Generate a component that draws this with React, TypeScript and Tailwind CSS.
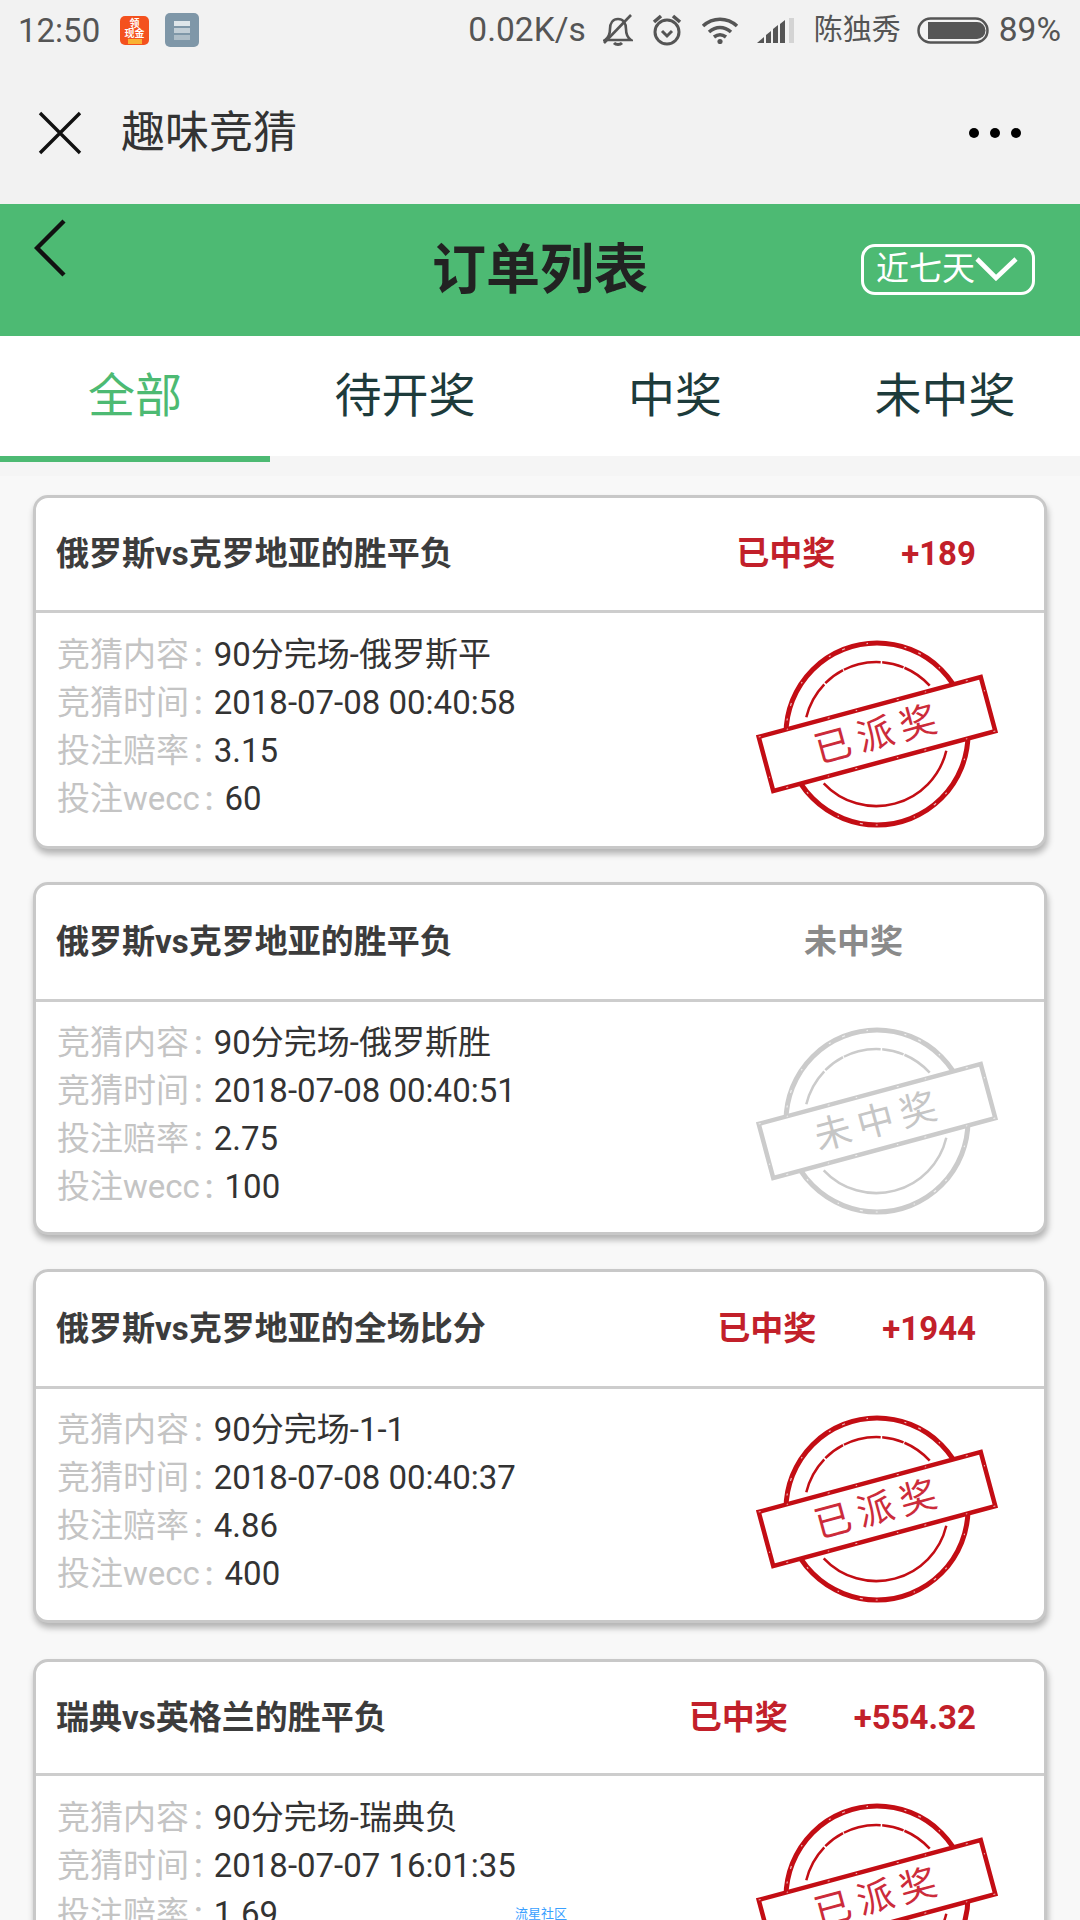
interface Order {
  title: string;
  won: boolean;
  amount?: string;
  content: string;
  time: string;
  odds: string;
  stake: string;
  headerHeight: string;
  bodyHeight: string;
  gap: string;
}

const orders: Order[] = [
  {
    title: '俄罗斯vs克罗地亚的胜平负',
    won: true,
    amount: '+189',
    content: '90分完场-俄罗斯平',
    time: '2018-07-08 00:40:58',
    odds: '3.15',
    stake: '60',
    headerHeight: 'h-[115px]',
    bodyHeight: 'h-[233px]',
    gap: 'mb-[33px]'
  },
  {
    title: '俄罗斯vs克罗地亚的胜平负',
    won: false,
    content: '90分完场-俄罗斯胜',
    time: '2018-07-08 00:40:51',
    odds: '2.75',
    stake: '100',
    headerHeight: 'h-[117px]',
    bodyHeight: 'h-[230px]',
    gap: 'mb-[34px]'
  },
  {
    title: '俄罗斯vs克罗地亚的全场比分',
    won: true,
    amount: '+1944',
    content: '90分完场-1-1',
    time: '2018-07-08 00:40:37',
    odds: '4.86',
    stake: '400',
    headerHeight: 'h-[117px]',
    bodyHeight: 'h-[231px]',
    gap: 'mb-[36px]'
  },
  {
    title: '瑞典vs英格兰的胜平负',
    won: true,
    amount: '+554.32',
    content: '90分完场-瑞典负',
    time: '2018-07-07 16:01:35',
    odds: '1.69',
    stake: '200',
    headerHeight: 'h-[114px]',
    bodyHeight: 'h-[233px]',
    gap: 'mb-[33px]'
  }
];

const tabs = ['全部', '待开奖', '中奖', '未中奖'];

function StatusBar() {
  return (
    <div className="flex h-[60px] items-center pl-[18px] pr-[19px] text-[#555]">
      <span className="text-[33px] leading-none">12:50</span>
      <svg className="ml-[20px]" width="29" height="29" viewBox="0 0 29 29">
        <rect width="29" height="29" rx="5" fill="#f4511e" />
        <text x="14.5" y="11" textAnchor="middle" fontSize="10" fontWeight="700" fill="#fff">领</text>
        <text x="14.5" y="21" textAnchor="middle" fontSize="10" fontWeight="700" fill="#fff">现金</text>
        <rect x="8" y="23" width="14" height="5" fill="#f9b233" />
      </svg>
      <svg className="ml-[16px]" width="34" height="34" viewBox="0 0 34 34">
        <rect width="34" height="34" rx="5" fill="#7f97a8" />
        <rect x="9" y="8" width="16" height="5" fill="#dfe6ea" />
        <rect x="9" y="15" width="16" height="5" fill="#c2ced6" />
        <rect x="9" y="22" width="16" height="5" fill="#aebdc7" />
      </svg>
      <span className="ml-auto text-[33.5px] leading-none">0.02K/s</span>
      <svg className="ml-[17px]" width="30" height="32" viewBox="0 0 30 32" fill="none" stroke="#555" strokeWidth="2.6">
        <path d="M2 26c3-2 5-5 5-11 0-6 3-10 8-10s8 4 8 10c0 6 2 9 5 11z" />
        <path d="M11 29c2 2 6 2 8 0" strokeWidth="3" />
        <path d="M1 29 28 1" />
      </svg>
      <svg className="ml-[18px]" width="32" height="32" viewBox="0 0 32 32" fill="none" stroke="#555" strokeWidth="3">
        <circle cx="16" cy="18" r="12" />
        <path d="M11 17l5 5 5-5" />
        <path d="M3 8l7-6M29 8l-7-6" strokeWidth="3.6" />
      </svg>
      <svg className="ml-[18px]" width="38" height="28" viewBox="0 0 38 28" fill="none" stroke="#555" strokeWidth="3.6">
        <path d="M2 10c10-9 24-9 34 0" />
        <path d="M8 16c7-6 15-6 22 0" />
        <path d="M13 21c4-3 8-3 12 0" />
        <circle cx="19" cy="25.5" r="2.6" fill="#555" stroke="none" />
      </svg>
      <svg className="ml-[18px]" width="37" height="25" viewBox="0 0 37 25">
        <path d="M0 25 7 19v6z" fill="#555" />
        <path d="M9 17l5-4v12H9z" fill="#555" />
        <path d="M16 11l5-4v18h-5z" fill="#555" />
        <path d="M23 6l5-4v23h-5z" fill="#555" />
        <path d="M32 0h5v25h-5z" fill="#d4d4d4" />
      </svg>
      <span className="ml-[20px] text-[29px] leading-none">陈独秀</span>
      <svg className="ml-[16px]" width="72" height="27" viewBox="0 0 72 27">
        <rect x="1.5" y="1.5" width="69" height="24" rx="12" fill="none" stroke="#555" strokeWidth="2.5" />
        <path d="M11 5h49a8.500 8.500 0 0 1 0 17H11z" fill="#555" />
      </svg>
      <span className="ml-[10px] text-[33.5px] leading-none">89%</span>
    </div>
  );
}

function Stamp({ won }: { won: boolean }) {
  const color = won ? '#c30d14' : '#cbcbcb';
  const textColor = won ? '#cc2b3a' : '#c6c6c6';
  return (
    <svg width="250" height="210" viewBox="-125 -105 250 210" className="mt-[8px] shrink-0">
      <circle r="91" fill="none" stroke={color} strokeWidth="5" />
      {/* white flecks so the ring reads as a worn rubber stamp */}
      <circle r="91" fill="none" stroke="#fff" strokeWidth="1.2" strokeOpacity="0.7" strokeDasharray="3 22 1.500 37 2 13" />
      <path d="M-70.7 -16.7A72 72 0 0 1 52.7 -48.3" fill="none" stroke={color} strokeWidth="2.5" strokeDasharray="38 1.500 22 1" />
      <path d="M69.3 16.7A72 72 0 0 1 -53.3 49.3" fill="none" stroke={color} strokeWidth="2.5" />
      <g transform="rotate(-15.1)">
        <rect x="-115" y="-28" width="230" height="56" fill="#fff" stroke={color} strokeWidth="4.5" />
        <rect x="-115" y="-28" width="230" height="56" fill="none" stroke="#fff" strokeWidth="1" strokeOpacity="0.7" strokeDasharray="2 27 1.500 41" />
        <text
          x="2"
          y="13"
          textAnchor="middle"
          fontSize="37"
          letterSpacing="7"
          fill={textColor}
          fontFamily="'Noto Sans CJK SC', sans-serif"
        >
          {won ? '已派奖' : '未中奖'}
        </text>
      </g>
    </svg>
  );
}

function Row({ label, value }: { label: string; value: string }) {
  return (
    <p className="flex h-[48px] items-center whitespace-nowrap">
      <span className="text-[#c4c4c4]">{label}</span>
      <span className="ml-[5px] font-medium text-[#c4c4c4]">:</span>
      <span className="ml-[11px] text-[#333]">{value}</span>
    </p>
  );
}

function OrderCard({ order }: { order: Order }) {
  return (
    <div className={`mx-[33px] rounded-[15px] border-[3px] border-[#c8c8c8] bg-white shadow-[1px_5px_6px_rgba(0,0,0,0.28)] ${order.gap}`}>
      <div className={`flex items-center border-b-[3px] border-[#cdcdcd] pl-[20px] text-[33px] font-bold ${order.headerHeight}`}>
        <span className="text-[#3c3c3c]">{order.title}</span>
        <span className={`ml-auto ${order.won ? 'text-[#c2202a]' : 'mr-[141px] text-[#8a8a8a]'}`}>
          {order.won ? '已中奖' : '未中奖'}
        </span>
        {order.amount && <span className="ml-[66px] mr-[68px] text-[#c2202a]">{order.amount}</span>}
      </div>
      <div className={`flex items-center justify-between pl-[21px] pr-[42px] text-[33px] ${order.bodyHeight}`}>
        <div className="pb-[5px]">
          <Row label="竞猜内容" value={order.content} />
          <Row label="竞猜时间" value={order.time} />
          <Row label="投注赔率" value={order.odds} />
          <Row label="投注wecc" value={order.stake} />
        </div>
        <Stamp won={order.won} />
      </div>
    </div>
  );
}

export default function App() {
  return (
    <div className="relative h-[1920px] w-[1080px] overflow-hidden bg-[#f8f8f8] font-[Roboto,'Noto_Sans_CJK_SC',sans-serif]">
      <div className="h-[204px] bg-[#f2f2f2]">
        <StatusBar />
        <div className="flex h-[144px] items-center pl-[38px] pr-[59px] pt-[2px]">
          <svg width="44" height="44" viewBox="0 0 44 44" fill="none" stroke="#111" strokeWidth="3.4">
            <path d="M2 2l40 40M42 2 2 42" />
          </svg>
          <span className="ml-[39px] text-[44px] text-[#333]">趣味竞猜</span>
          <div className="ml-auto flex gap-[11px]">
            <span className="h-[10px] w-[10px] rounded-full bg-black" />
            <span className="h-[10px] w-[10px] rounded-full bg-black" />
            <span className="h-[10px] w-[10px] rounded-full bg-black" />
          </div>
        </div>
      </div>

      <div className="grid h-[132px] grid-cols-[1fr_auto_1fr] items-center bg-[#4dba73]">
        <div className="self-start pl-[34px] pt-[15px]">
          <svg width="32" height="58" viewBox="0 0 32 58" fill="none" stroke="#111" strokeWidth="4.4">
            <path d="M30 2 3 29l27 27" />
          </svg>
        </div>
        <h1 className="text-[54px] font-bold text-[#222]">订单列表</h1>
        <div className="flex justify-end pb-[2px] pr-[45px]">
          <div className="flex h-[51px] w-[174px] items-center rounded-[14px] border-[3px] border-white pl-[12px] text-[33px] text-white">
            近七天
            <svg className="shrink-0" width="43" height="24" viewBox="0 0 43 24" fill="none" stroke="#fff" strokeWidth="4.6">
              <path d="M2 2l19 19L41 2" />
            </svg>
          </div>
        </div>
      </div>

      <div className="grid h-[120px] grid-cols-4 items-center bg-white text-center text-[47px] text-[#1d3b3b]">
        {tabs.map((tab, i) => (
          <span key={tab} className={i === 0 ? 'text-[#4dba73]' : ''}>
            {tab}
          </span>
        ))}
      </div>
      <div className="h-[20px] bg-[#f5f5f5]">
        <div className="h-[6px] w-[270px] bg-[#4dba73]" />
      </div>

      <div className="pt-[19px]">
        {orders.map((order) => (
          <OrderCard key={order.time} order={order} />
        ))}
      </div>

      <span className="absolute left-[515px] top-[1907px] text-[13px] leading-none text-[#3aa0ff]">流星社区</span>
    </div>
  );
}
